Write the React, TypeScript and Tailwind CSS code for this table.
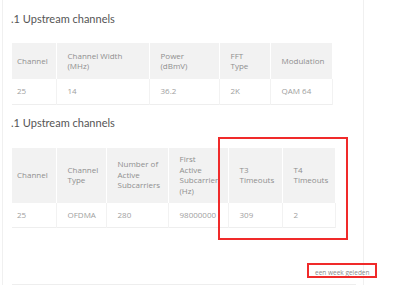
import React from "react";

const font = { fontFamily: '"Open Sans", "Liberation Sans", sans-serif' };
const titleFont = { fontFamily: 'Lato, "Open Sans", sans-serif' };

type Col = { label: React.ReactNode; w: string; first?: boolean };

function Table({ cols, row, headH }: { cols: Col[]; row: string[]; headH: string }) {
  return (
    <table className="border-collapse table-fixed">
      <thead>
        <tr className={`bg-[#f2f2f2] ${headH}`}>
          {cols.map((c, i) => (
            <th
              key={i}
              className={`${c.w} ${c.first ? "pl-[5px]" : "pl-[11px]"} pr-0 text-left align-middle font-normal text-[8px] leading-[10.5px] text-[#8f8f8f] whitespace-nowrap border-l border-white first:border-l-0`}
            >
              {c.label}
            </th>
          ))}
        </tr>
      </thead>
      <tbody>
        <tr className="h-[25px] border-b border-[#eeeeee]">
          {row.map((v, i) => (
            <td
              key={i}
              className={`${i === 0 ? "pl-[5px]" : "pl-[11px]"} pr-0 align-middle font-normal text-[8px] text-[#a0a0a0] whitespace-nowrap border-l border-[#f2f2f2] first:border-l-0 last:border-r`}
            >
              {v}
            </td>
          ))}
        </tr>
      </tbody>
    </table>
  );
}

export default function App() {
  return (
    <div className="relative w-[400px] h-[287px] overflow-hidden bg-white" style={font}>
      <div className="ml-[2px] w-[362px] h-[285px] border-l border-r border-[#f0f0f0] pl-[8px] pt-[10px]">
        <h2 className="text-[11px] leading-[18px] font-normal text-[#555]" style={titleFont}>.1 Upstream channels</h2>
        <div className="mt-[15px] ml-[1px]">
          <Table
            headH="h-[36px]"
            cols={[
              { label: "Channel", w: "w-[44px]", first: true },
              { label: <>Channel Width<br />(MHz)</>, w: "w-[93px]" },
              { label: <>Power<br />(dBmV)</>, w: "w-[70px]" },
              { label: <>FFT<br />Type</>, w: "w-[51px]" },
              { label: "Modulation", w: "w-[62px]" },
            ]}
            row={["25", "14", "36.2", "2K", "QAM 64"]}
          />
        </div>
        <h2 className="mt-[9px] text-[11px] leading-[18px] font-normal text-[#555]" style={titleFont}>.1 Upstream channels</h2>
        <div className="mt-[16px] ml-[1px]">
          <Table
            headH="h-[55px]"
            cols={[
              { label: "Channel", w: "w-[44px]", first: true },
              { label: <>Channel<br />Type</>, w: "w-[50px]" },
              { label: <>Number of<br />Active<br />Subcarriers</>, w: "w-[62px]" },
              { label: <>First<br />Active<br />Subcarrier<br />(Hz)</>, w: "w-[60px]" },
              { label: <>T3<br />Timeouts</>, w: "w-[54px]" },
              { label: <>T4<br />Timeouts</>, w: "w-[53px]" },
            ]}
            row={["25", "OFDMA", "280", "98000000", "309", "2"]}
          />
        </div>
        <div className="mt-[41px] ml-[304px] whitespace-nowrap text-[6.5px] leading-[8px] text-[#8a8a8a]">een week geleden</div>
        <div className="mt-[7px] ml-[1px] w-[344px] border-b border-[#eeeeee]" />
      </div>

      {/* annotation frames */}
      <div className="absolute left-[218px] top-[137px] w-[130px] h-[103px] border-2 border-[#f02a2a]" />
      <div className="absolute left-[307px] top-[263px] w-[70px] h-[15px] border-2 border-[#f02a2a]" />
    </div>
  );
}
